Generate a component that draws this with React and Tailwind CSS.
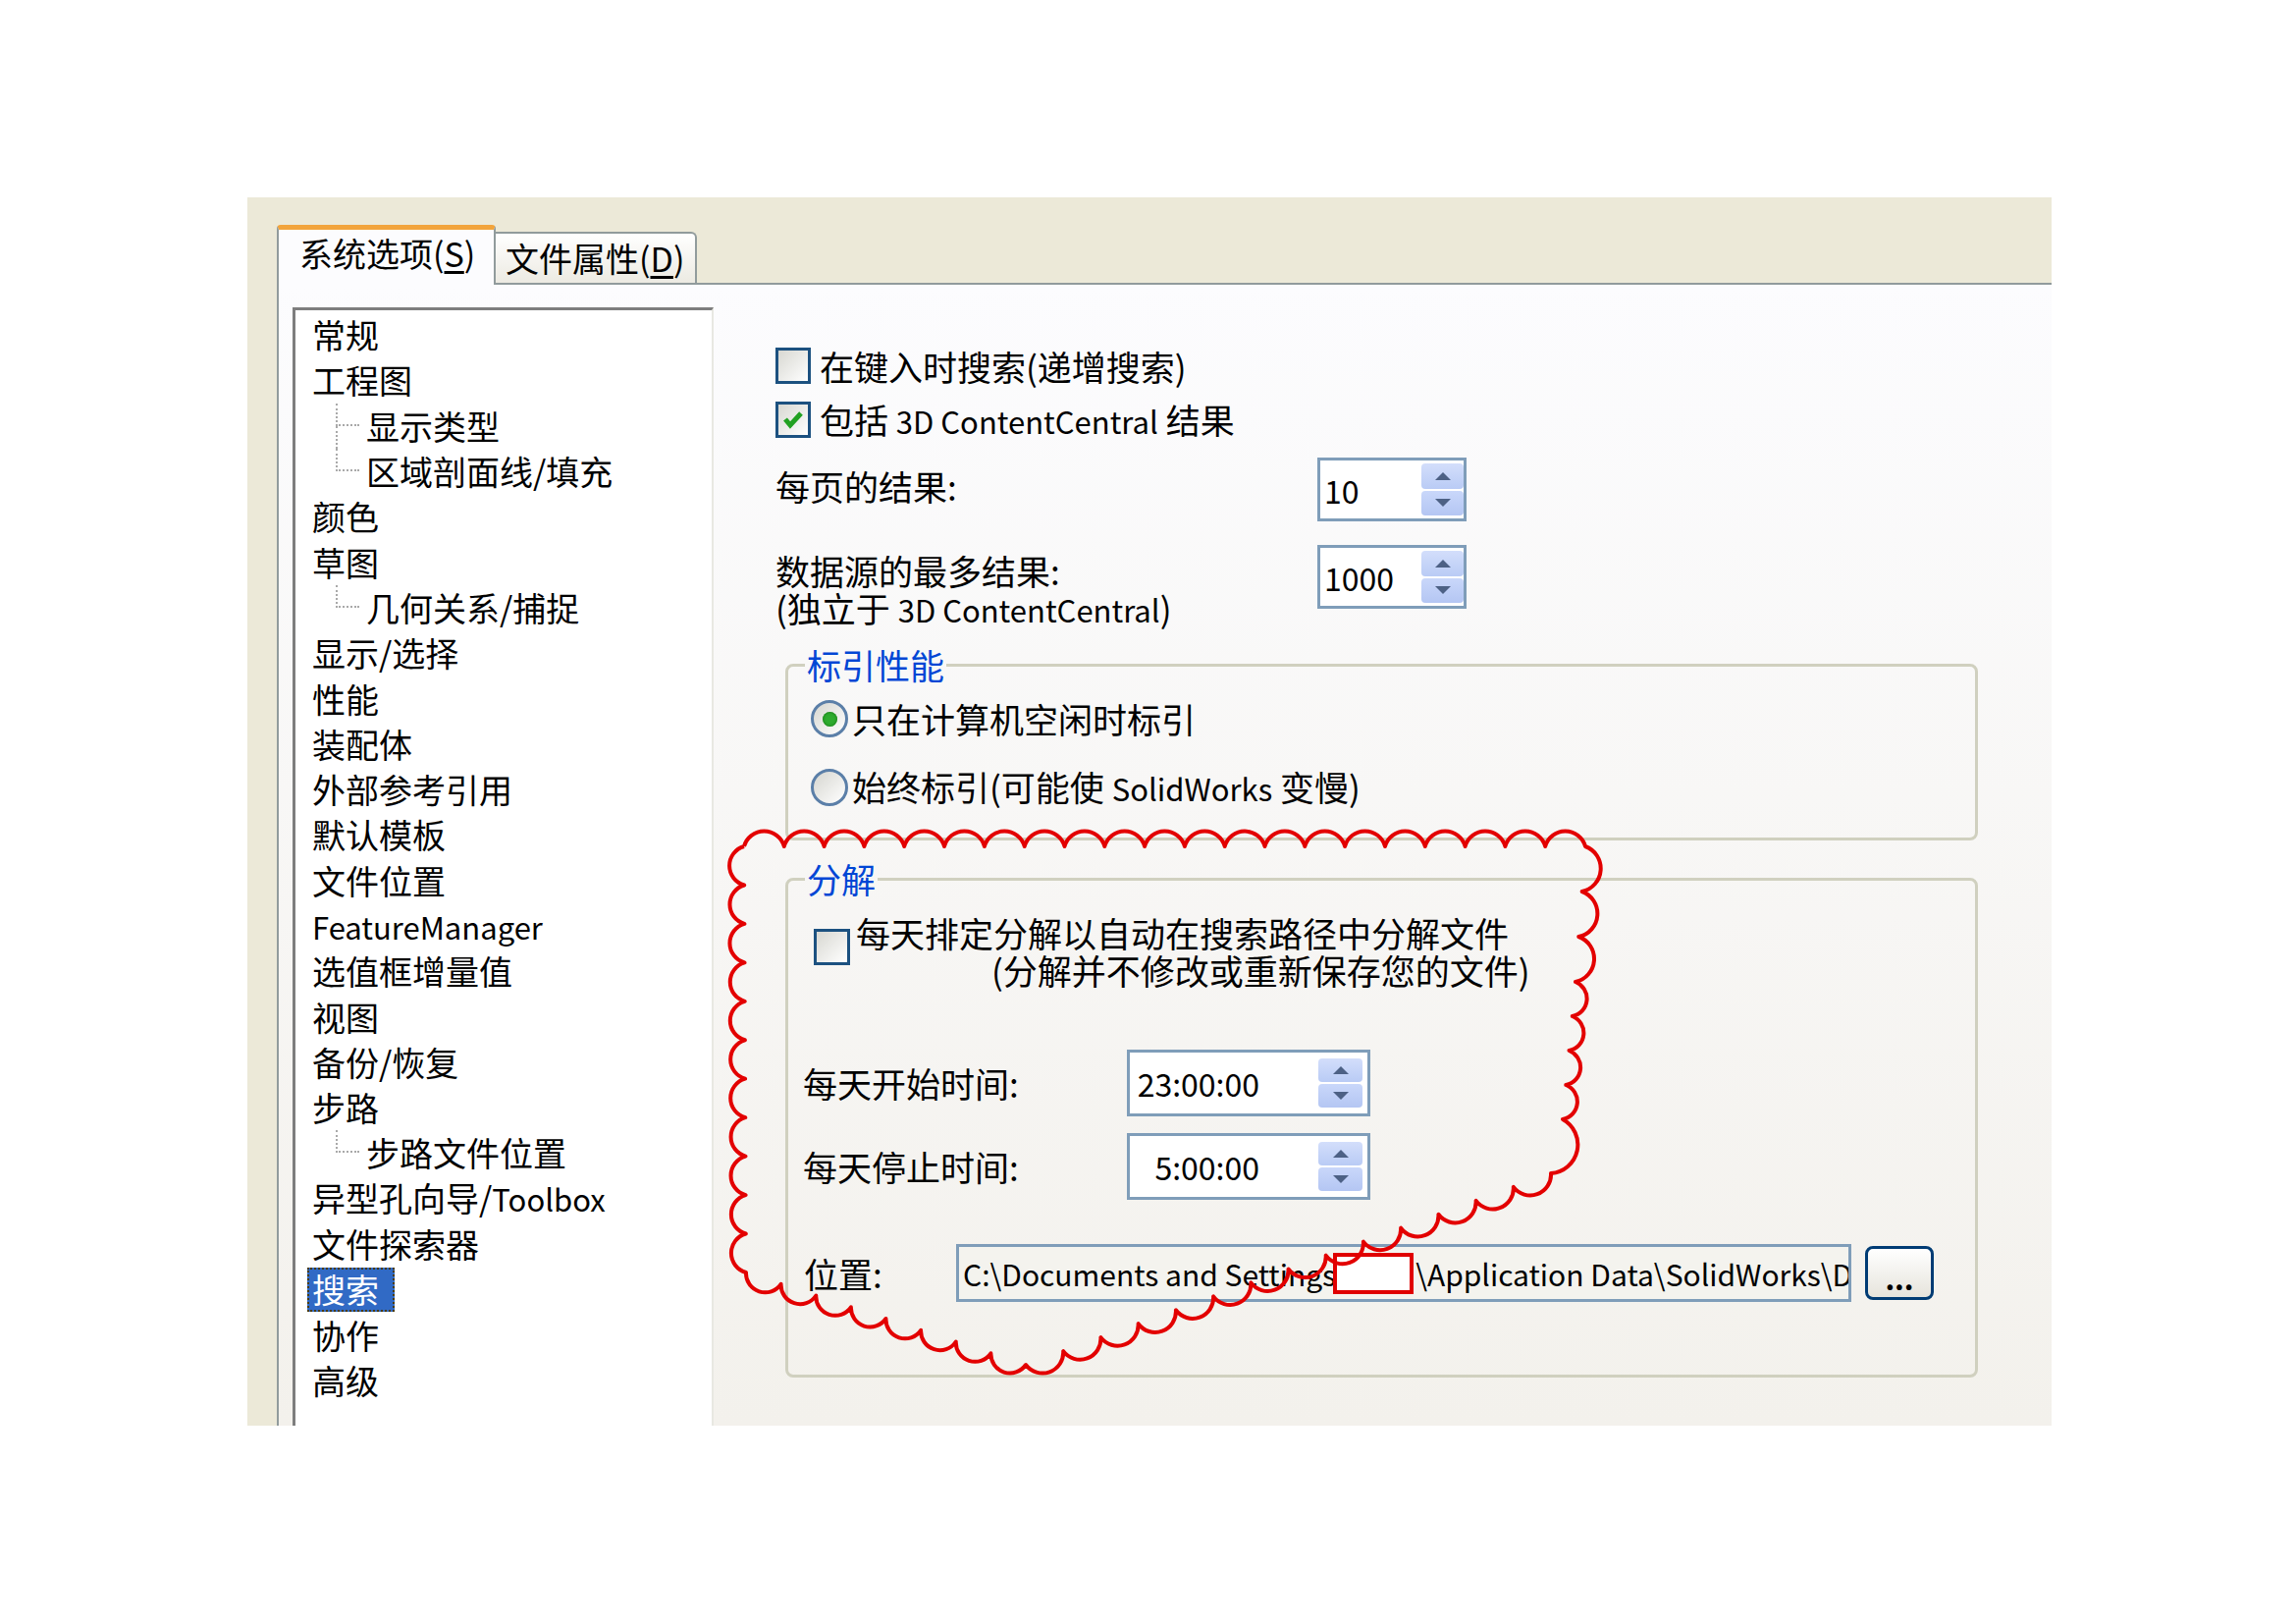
import React from 'react'

const tree = [
  ['常规', 0], ['工程图', 0], ['显示类型', 1], ['区域剖面线/填充', 2],
  ['颜色', 0], ['草图', 0], ['几何关系/捕捉', 2], ['显示/选择', 0],
  ['性能', 0], ['装配体', 0], ['外部参考引用', 0], ['默认模板', 0],
  ['文件位置', 0], ['FeatureManager', 0], ['选值框增量值', 0], ['视图', 0],
  ['备份/恢复', 0], ['步路', 0], ['步路文件位置', 2], ['异型孔向导/Toolbox', 0],
  ['文件探索器', 0], ['搜索', 0, true], ['协作', 0], ['高级', 0],
]

// revision cloud around the "分解" group
const cloudPts = [
  [758, 862], [1615, 862], [1605, 1000], [1592, 1140], [1580, 1195],
  [1045, 1390], [760, 1296],
]

function cloudPath(pts, size = 40) {
  let d = `M ${pts[0][0]} ${pts[0][1]}`
  for (let i = 0; i < pts.length; i++) {
    const [x1, y1] = pts[i]
    const [x2, y2] = pts[(i + 1) % pts.length]
    const len = Math.hypot(x2 - x1, y2 - y1)
    const n = Math.max(1, Math.round(len / size))
    const r = (len / n / 2) * 1.04
    for (let k = 1; k <= n; k++) {
      const x = x1 + ((x2 - x1) * k) / n
      const y = y1 + ((y2 - y1) * k) / n
      d += ` A ${r.toFixed(1)} ${r.toFixed(1)} 0 0 1 ${x.toFixed(1)} ${y.toFixed(1)}`
    }
  }
  return d
}

// Latin runs are narrower in the original dialog font
const L = ({ children }) => <span className="text-[31px]">{children}</span>

function TreeRow({ label, kind, selected }) {
  if (kind === 0) {
    return (
      <div className="flex h-[46.3px] items-center">
        {selected ? (
          <span className="ml-[12px] flex h-[45px] w-[89px] items-center border-2 border-dotted border-[#4a3b0a] bg-[#316ac5] pl-[3px] text-white">
            {label}
          </span>
        ) : (
          <span className="ml-[17px]">{label}</span>
        )}
      </div>
    )
  }
  return (
    <div className="flex h-[46.3px] items-center">
      <div className="ml-[41px] flex h-full w-[24px] flex-col">
        <div className="h-1/2 border-b-2 border-l-2 border-dotted border-[#a9a9a9]" />
        <div className={kind === 1 ? 'h-1/2 border-l-2 border-dotted border-[#a9a9a9]' : 'h-1/2'} />
      </div>
      <span className="ml-[7px]">{label}</span>
    </div>
  )
}

function treeLabel(label) {
  const parts = label.split(/([A-Za-z]+)/)
  return parts.map((p, i) => (/[A-Za-z]/.test(p) ? <L key={i}>{p}</L> : p))
}

function Checkbox({ checked, size = 'w-[36px] h-[36px]' }) {
  return (
    <div className={`${size} shrink-0 border-[3px] border-[#1c5180] bg-linear-to-br from-[#d8d8d2] to-white flex items-center justify-center`}>
      {checked && (
        <svg width="22" height="22" viewBox="0 0 22 22">
          <path d="M3 10 L8 16 L19 4" fill="none" stroke="#21a121" strokeWidth="5" strokeLinejoin="miter" />
        </svg>
      )}
    </div>
  )
}

function Radio({ checked }) {
  return (
    <div className="flex h-[38px] w-[38px] shrink-0 items-center justify-center rounded-full border-[3px] border-[#5b7fa8] bg-linear-to-br from-[#d6d6d0] to-white">
      {checked && (
        <div className="h-[15px] w-[15px] rounded-full bg-[#2eab2e] shadow-[inset_0_0_3px_#0d6e0d]" />
      )}
    </div>
  )
}

function Arrow({ down }) {
  return (
    <svg width="16" height="10" viewBox="0 0 16 10">
      <polygon points={down ? '0,1 16,1 8,9' : '8,1 16,9 0,9'} fill="#4d6185" />
    </svg>
  )
}

function Spin({ value, box, text, btn }) {
  return (
    <div className={`flex shrink-0 border-[3px] border-[#7f9db9] bg-white ${box}`}>
      <div className={`flex flex-1 items-center text-[32px] ${text}`}>{value}</div>
      <div className={`flex flex-col gap-[2px] ${btn}`}>
        <div className="flex flex-1 items-center justify-center rounded-[4px] bg-linear-to-b from-[#d3defb] to-[#b9cbf5]">
          <Arrow />
        </div>
        <div className="flex flex-1 items-center justify-center rounded-[4px] bg-linear-to-b from-[#c9d7fa] to-[#b4c6f3]">
          <Arrow down />
        </div>
      </div>
    </div>
  )
}

export default function App() {
  return (
    <div className="relative h-[1654px] w-[2339px] overflow-hidden bg-white font-['Noto_Sans_CJK_SC',sans-serif] text-[34px] leading-[36px] text-black">
      <div className="pl-[252px] pt-[201px]">
        <div className="flex h-[1251px] w-[1838px] flex-col bg-[#ece9d8]">
          {/* Tabs */}
          <div className="flex h-[87px] shrink-0 items-end pl-[30px]">
            <div className="relative z-10 -mb-[2px] h-[61px] w-[223px] rounded-t-[4px] border-x-2 border-t-[5px] border-x-[#919b9c] border-t-[#f2a43c] bg-[#fcfcfe] pl-[21px] pt-[6px]">
              系统选项(<span className="underline underline-offset-4">S</span>)
            </div>
            <div className="h-[52px] w-[205px] rounded-tr-[6px] border-r-2 border-t-2 border-[#919b9c] bg-linear-to-b from-white to-[#eceae2] pl-[10px] pt-[7px]">
              文件属性(<span className="underline underline-offset-4">D</span>)
            </div>
          </div>

          {/* Panel */}
          <div className="ml-[30px] flex min-h-0 flex-1 overflow-hidden border-l-2 border-t-2 border-[#919b9c] bg-linear-to-b from-[#fcfcfe] to-[#f3f1ec]">
            {/* Tree list */}
            <div className="ml-[14px] mt-[23px] w-[429px] shrink-0 overflow-hidden border-l-[3px] border-r-2 border-t-[3px] border-l-[#7e7e7e] border-r-[#e8e8e2] border-t-[#7e7e7e] bg-white pt-[2px]">
              {tree.map(([label, kind, sel]) => (
                <TreeRow key={label} label={treeLabel(label)} kind={kind} selected={sel} />
              ))}
            </div>

            {/* Options */}
            <div className="flex flex-col pl-[63px] text-[35px]">
              <div className="mt-[64px] flex h-[37px] items-center gap-[9px]">
                <Checkbox size="w-[36px] h-[37px]" />
                <span>在键入时搜索(递增搜索)</span>
              </div>
              <div className="mt-[18px] flex h-[37px] items-center gap-[9px]">
                <Checkbox checked size="w-[36px] h-[37px]" />
                <span>包括 <L>3D ContentCentral</L> 结果</span>
              </div>
              <div className="mt-[20px] flex items-center">
                <div className="-mt-[8px] w-[552px]">每页的结果:</div>
                <Spin value="10" box="w-[152px] h-[65px]" text="pl-[4px]" btn="w-[43px] py-[3px]" />
              </div>
              <div className="mt-[24px] flex items-start">
                <div className="w-[552px] pt-[7px] leading-[38px]">
                  <div>数据源的最多结果:</div>
                  <div>(独立于 <L>3D ContentCentral</L>)</div>
                </div>
                <Spin value="1000" box="w-[152px] h-[65px]" text="pl-[4px]" btn="w-[43px] py-[3px]" />
              </div>

              <fieldset className="ml-[10px] mt-[19px] w-[1215px] rounded-[8px] border-[3px] border-[#d0d0bf] pb-[32px]">
                <legend className="ml-[17px] px-[2px] text-[#0046d5]">标引性能</legend>
                <div className="mt-[18px] flex h-[38px] items-center gap-[4px] pl-[23px]">
                  <Radio checked />
                  <span>只在计算机空闲时标引</span>
                </div>
                <div className="mt-[32px] flex h-[38px] items-center gap-[4px] pl-[23px]">
                  <Radio />
                  <span>始终标引(可能使 <L>SolidWorks</L> 变慢)</span>
                </div>
              </fieldset>

              <fieldset className="ml-[10px] mt-[21px] w-[1215px] rounded-[8px] border-[3px] border-[#d0d0bf] pb-[74px]">
                <legend className="ml-[17px] px-[2px] text-[#0046d5]">分解</legend>
                <div className="mt-[18px] flex items-start pl-[26px]">
                  <div className="mt-[15px]">
                    <Checkbox size="w-[37px] h-[37px]" />
                  </div>
                  <div className="ml-[6px] leading-[38px]">
                    <div>每天排定分解以自动在搜索路径中分解文件</div>
                    <div className="pl-[138px]">(分解并不修改或重新保存您的文件)</div>
                  </div>
                </div>
                <div className="mt-[62px] flex items-center pl-[15px]">
                  <div className="w-[330px]">每天开始时间:</div>
                  <Spin value="23:00:00" box="w-[248px] h-[68px]" text="justify-end pr-[60px]" btn="w-[45px] mr-[5px] py-[6px]" />
                </div>
                <div className="mt-[17px] flex items-center pl-[15px]">
                  <div className="w-[330px]">每天停止时间:</div>
                  <Spin value="5:00:00" box="w-[248px] h-[68px]" text="justify-end pr-[60px]" btn="w-[45px] mr-[5px] py-[6px]" />
                </div>
                <div className="mt-[45px] flex items-center pl-[16px]">
                  <div className="w-[155px]">位置:</div>
                  <div className="flex h-[59px] w-[912px] items-center overflow-hidden whitespace-nowrap border-[3px] border-[#7f9db9] bg-[#f4f3ee] pl-[4px] text-[30px]">
                    <span>{'C:\\Documents and Settings'}</span>
                    <span className="-ml-[3px] mr-[2px] inline-block h-[42px] w-[82px] shrink-0 border-[4px] border-[#e00000] bg-white" />
                    <span>{'\\Application Data\\SolidWorks\\D'}</span>
                  </div>
                  <div className="ml-[14px] flex h-[55px] w-[70px] items-center justify-center rounded-[8px] border-[3px] border-[#003c74] bg-linear-to-b from-white to-[#e6e4dc] pt-[8px] text-[30px] font-bold leading-none">
                    ...
                  </div>
                </div>
              </fieldset>
            </div>
          </div>
        </div>
      </div>

      {/* Red revision cloud annotation */}
      <svg className="pointer-events-none absolute inset-0" width="2339" height="1654" viewBox="0 0 2339 1654">
        <path d={cloudPath(cloudPts)} fill="none" stroke="#e30000" strokeWidth="4" strokeLinejoin="round" />
      </svg>
    </div>
  )
}
